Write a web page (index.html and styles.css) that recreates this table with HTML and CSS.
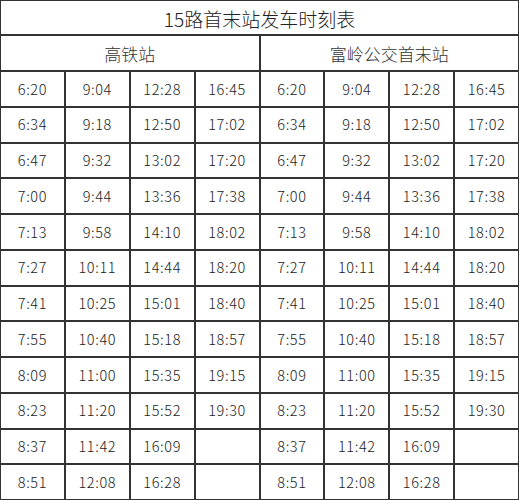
FILE: index.html
```html
<!DOCTYPE html>
<html lang="zh">
<head>
<meta charset="utf-8">
<link rel="stylesheet" href="styles.css">
</head>
<body>
<div class="timetable">
<div class="cell title">15路首末站发车时刻表</div>
<div class="cell station">高铁站</div><div class="cell station">富岭公交首末站</div>
<div class="cell">6:20</div><div class="cell">9:04</div><div class="cell">12:28</div><div class="cell">16:45</div><div class="cell">6:20</div><div class="cell">9:04</div><div class="cell">12:28</div><div class="cell">16:45</div>
<div class="cell">6:34</div><div class="cell">9:18</div><div class="cell">12:50</div><div class="cell">17:02</div><div class="cell">6:34</div><div class="cell">9:18</div><div class="cell">12:50</div><div class="cell">17:02</div>
<div class="cell">6:47</div><div class="cell">9:32</div><div class="cell">13:02</div><div class="cell">17:20</div><div class="cell">6:47</div><div class="cell">9:32</div><div class="cell">13:02</div><div class="cell">17:20</div>
<div class="cell">7:00</div><div class="cell">9:44</div><div class="cell">13:36</div><div class="cell">17:38</div><div class="cell">7:00</div><div class="cell">9:44</div><div class="cell">13:36</div><div class="cell">17:38</div>
<div class="cell">7:13</div><div class="cell">9:58</div><div class="cell">14:10</div><div class="cell">18:02</div><div class="cell">7:13</div><div class="cell">9:58</div><div class="cell">14:10</div><div class="cell">18:02</div>
<div class="cell">7:27</div><div class="cell">10:11</div><div class="cell">14:44</div><div class="cell">18:20</div><div class="cell">7:27</div><div class="cell">10:11</div><div class="cell">14:44</div><div class="cell">18:20</div>
<div class="cell">7:41</div><div class="cell">10:25</div><div class="cell">15:01</div><div class="cell">18:40</div><div class="cell">7:41</div><div class="cell">10:25</div><div class="cell">15:01</div><div class="cell">18:40</div>
<div class="cell">7:55</div><div class="cell">10:40</div><div class="cell">15:18</div><div class="cell">18:57</div><div class="cell">7:55</div><div class="cell">10:40</div><div class="cell">15:18</div><div class="cell">18:57</div>
<div class="cell">8:09</div><div class="cell">11:00</div><div class="cell">15:35</div><div class="cell">19:15</div><div class="cell">8:09</div><div class="cell">11:00</div><div class="cell">15:35</div><div class="cell">19:15</div>
<div class="cell">8:23</div><div class="cell">11:20</div><div class="cell">15:52</div><div class="cell">19:30</div><div class="cell">8:23</div><div class="cell">11:20</div><div class="cell">15:52</div><div class="cell">19:30</div>
<div class="cell">8:37</div><div class="cell">11:42</div><div class="cell">16:09</div><div class="cell"></div><div class="cell">8:37</div><div class="cell">11:42</div><div class="cell">16:09</div><div class="cell"></div>
<div class="cell">8:51</div><div class="cell">12:08</div><div class="cell">16:28</div><div class="cell"></div><div class="cell">8:51</div><div class="cell">12:08</div><div class="cell">16:28</div><div class="cell"></div>
</div>
</body>
</html>
```
FILE: styles.css
```css
html, body {
  margin: 0;
  padding: 0;
  background: #fff;
}
.timetable {
  box-sizing: border-box;
  width: 519px;
  height: 500px;
  display: grid;
  grid-template-columns: repeat(8, 1fr);
  grid-template-rows: 33px 34px repeat(12, 1fr);
  gap: 2px;
  padding: 1px;
  background: #333;
  font-family: "Noto Sans CJK SC", "Noto Sans", sans-serif;
  color: #222;
}
.cell {
  background: #fff;
  display: flex;
  align-items: center;
  justify-content: center;
  font-size: 14.5px;
  font-weight: 300;
  letter-spacing: 0.6px;
  line-height: 1;
}
.title {
  grid-column: 1 / 9;
  font-size: 19px;
  font-weight: 300;
  letter-spacing: 0;
  padding-top: 1px;
  color: #222;
}
.station {
  grid-column: span 4;
  font-size: 17px;
  font-weight: 300;
  letter-spacing: 0;
  color: #333;
}
```
